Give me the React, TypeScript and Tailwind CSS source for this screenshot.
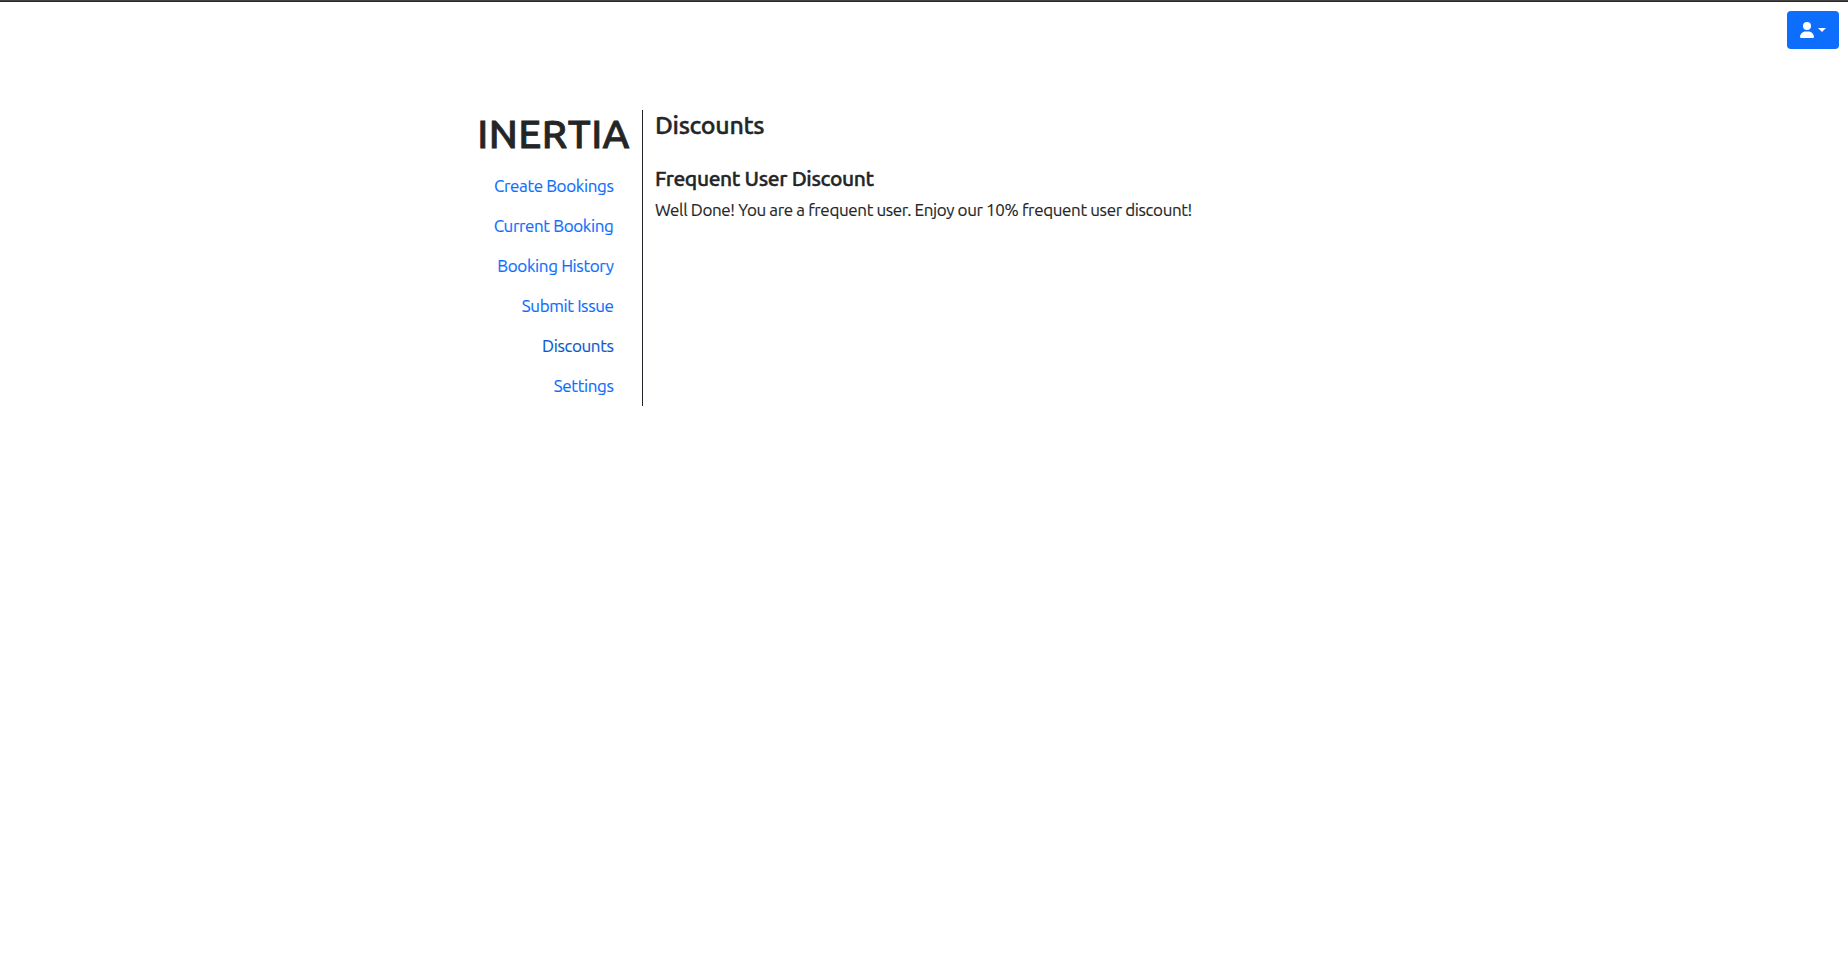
const links = [
  { label: "Create Bookings", active: false },
  { label: "Current Booking", active: false },
  { label: "Booking History", active: false },
  { label: "Submit Issue", active: false },
  { label: "Discounts", active: true },
  { label: "Settings", active: false },
];

function UserMenuButton() {
  return (
    <button
      type="button"
      aria-label="Account"
      className="flex h-[38px] w-[52px] items-center gap-1 rounded bg-[#0d6efd] pl-[13px] text-white"
    >
      <svg className="h-4 w-3.5" viewBox="0 0 448 512" fill="currentColor">
        <path d="M224 256A128 128 0 1 0 224 0a128 128 0 1 0 0 256zm-45.7 48C79.8 304 0 383.8 0 482.3C0 498.7 13.3 512 29.7 512H418.3c16.4 0 29.7-13.3 29.7-29.7C448 383.8 368.2 304 269.7 304H178.3z" />
      </svg>
      <span className="border-x-4 border-t-4 border-x-transparent border-t-white" />
    </button>
  );
}

export default function App() {
  return (
    <div className="min-h-screen bg-white font-[Ubuntu,'Open_Sans',sans-serif] text-base leading-6 text-[#212529]">
      <div className="h-px bg-[#454142]" />
      <div className="h-px bg-[#2c282a]" />
      <header className="flex h-[108px] items-start justify-end pt-[9px] pr-[9px]">
        <UserMenuButton />
      </header>
      <main className="ml-[466px] flex">
        <nav className="flex w-[177px] flex-col border-r border-[#212529] pr-3 text-right text-[17px] tracking-[-0.37px] [-webkit-text-stroke:0.15px]">
          <h1 className="mb-2 text-[40px] leading-[48px] font-medium tracking-[0.45px] text-[#242526] [-webkit-text-stroke:0.8px]">
            INERTIA
          </h1>
          {links.map(({ label, active }) => (
            <a
              key={label}
              href="#"
              className={active ? "py-2 pr-[16.5px] pl-4 text-[#0a58ca]" : "py-2 pr-[16.5px] pl-4 text-[#0d6efd]"}
            >
              {label}
            </a>
          ))}
        </nav>
        <section className="pt-px pl-3 text-[#242526]">
          <h2 className="text-[25px] leading-[29px] font-medium tracking-[-0.35px] [-webkit-text-stroke:0.4px]">
            Discounts
          </h2>
          <h3 className="mt-[26px] mb-2 text-[21px] leading-6 font-medium tracking-[-0.37px] [-webkit-text-stroke:0.4px]">
            Frequent User Discount
          </h3>
          <p className="text-[17px] tracking-[-0.37px] [-webkit-text-stroke:0.15px]">
            Well Done! You are a frequent user. Enjoy our 10% frequent user discount!
          </p>
        </section>
      </main>
    </div>
  );
}
